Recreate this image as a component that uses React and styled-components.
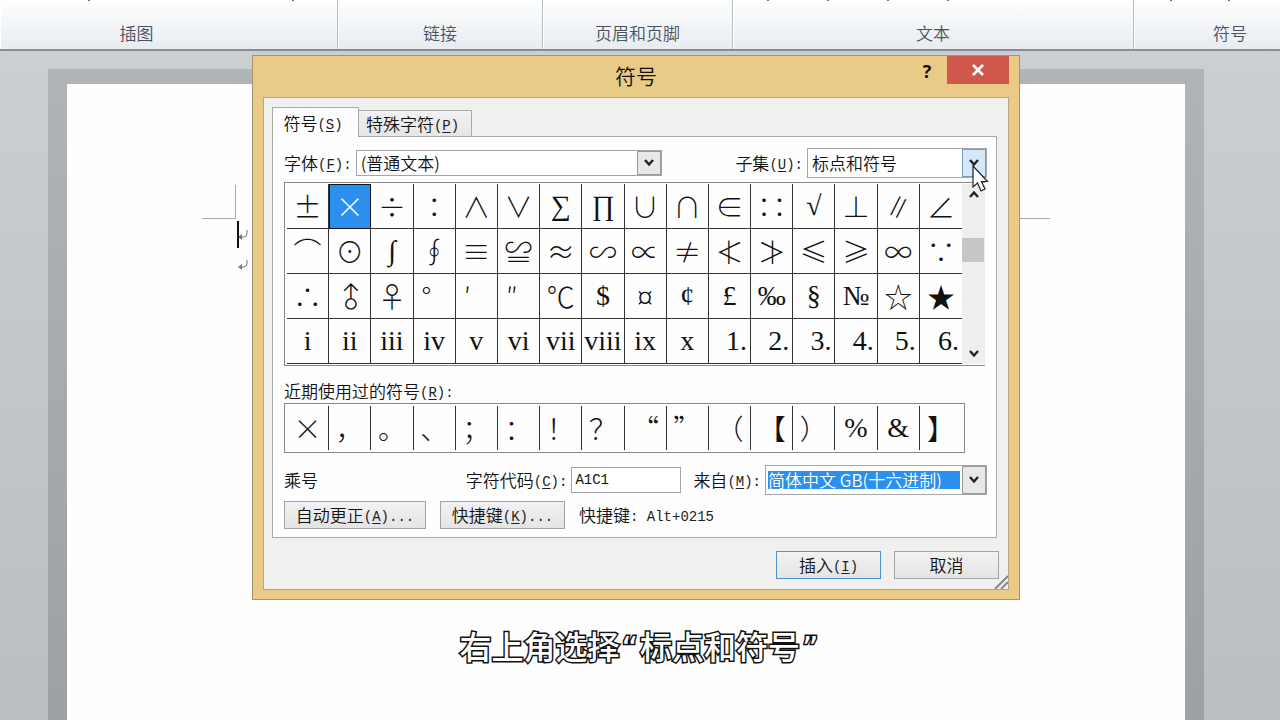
import React from 'react';
import styled, { createGlobalStyle } from 'styled-components';

const GROUPS = [
  { name: '插图', shift: '0 64px 0 0', start: 88, gap: 202, tips: 2 },
  { name: '链接', shift: '0', start: 0, gap: 0, tips: 0 },
  { name: '页眉和页脚', shift: '0', start: 0, gap: 0, tips: 0 },
  { name: '文本', shift: '0', start: 34, gap: 58, tips: 4 },
  { name: '符号', shift: '0 0 0 46px', start: 36, gap: 56, tips: 2 },
];

const SYMBOLS = [
  ['±', '×', '÷', '∶', '∧', '∨', '∑', '∏', '∪', '∩', '∈', '∷', '√', '⊥', '∥', '∠'],
  ['⌒', '⊙', '∫', '∮', '≡', '≌', '≈', '∽', '∝', '≠', '≮', '≯', '≤', '≥', '∞', '∵'],
  ['∴', '♂', '♀', '°', '′', '″', '℃', '$', '¤', '¢', '£', '‰', '§', '№', '☆', '★'],
  ['i', 'ii', 'iii', 'iv', 'v', 'vi', 'vii', 'viii', 'ix', 'x', '1.', '2.', '3.', '4.', '5.', '6.'],
];

const RECENT = ['×', '，', '。', '、', '；', '：', '！', '？', '“', '”', '（', '【', '）', '%', '&', '】'];

const SERIF = /^[ivx\d∑∏∫√$£§№%&‰¢]/;

// Degree and prime marks hug the left of the cell, list numbers the right
const getAlign = (char) => {
  if (/[°′″]/.test(char)) {
    return 'left';
  }
  return /\d\./.test(char) ? 'right' : 'center';
};

const Chevron = ({ up }) => (
  <svg width="12" height="8" viewBox="0 0 12 8" aria-hidden="true">
    <path d={up ? 'M2 7 6 2.500 10 7' : 'M2 1 6 5.5 10 1'} fill="none" stroke="#222" strokeWidth="2.4" />
  </svg>
);

const ParagraphMark = () => (
  <svg width="11" height="14" viewBox="0 0 11 14" aria-hidden="true">
    <path d="M10 3V6Q10 10 7 10H4" fill="none" stroke="#777" />
    <path d="M1 10 5 7V13Z" fill="#777" />
  </svg>
);

const Hotkey = ({ letter, after }) => (
  <Latin>
    (<u>{letter}</u>){after}
  </Latin>
);

const Dropdown = ({ id, value, width, tall, active, selected, children }) => (
  <Combo $width={width} $tall={tall}>
    <ComboField id={id} $selected={selected} defaultValue={value}>
      <option>{value}</option>
    </ComboField>
    <ComboArrow $active={active}>
      <Chevron />
    </ComboArrow>
    {children}
  </Combo>
);

const App = () => {
  return (
    <Screen>
      <GlobalStyle />
      <Ribbon>
        {GROUPS.map(({ name, shift, start, gap, tips }) => (
          <Group key={name}>
            <Tips $start={start} $gap={gap}>
              {Array.from({ length: tips }, (_, i) => (
                <Tip key={i} />
              ))}
            </Tips>
            <GroupName $shift={shift}>{name}</GroupName>
          </Group>
        ))}
      </Ribbon>
      <Workspace>
        <PageEdge>
          <Page>
            <Margins>
              <Corner $side="right" />
              <Corner $side="left" />
            </Margins>
            <Line>
              <Caret />
              <ParagraphMark />
            </Line>
            <Line>
              <ParagraphMark />
            </Line>
          </Page>
        </PageEdge>
      </Workspace>

      <Overlay>
        <Dialog role="dialog" aria-labelledby="title">
          <TitleBar>
            <Title id="title">符号</Title>
            <WindowButtons>
              <HelpButton aria-label="帮助">?</HelpButton>
              <CloseButton aria-label="关闭">
                <svg width="14" height="12" viewBox="0 0 14 12">
                  <path d="M2 1 12 11M12 1 2 11" stroke="#fff" strokeWidth="2.6" />
                </svg>
              </CloseButton>
            </WindowButtons>
          </TitleBar>
          <Body>
            <Tabs role="tablist">
              <Tab role="tab" aria-selected="true" $active>
                符号
                <Hotkey letter="S" />
              </Tab>
              <Tab role="tab" aria-selected="false">
                特殊字符
                <Hotkey letter="P" />
              </Tab>
            </Tabs>
            <Panel>
              <Row>
                <Label htmlFor="font">
                  字体
                  <Hotkey letter="F" after=":" />
                </Label>
                <Dropdown id="font" value="(普通文本)" width={306} />
                <Spring />
                <Label htmlFor="subset">
                  子集
                  <Hotkey letter="U" after=":" />
                </Label>
                <Dropdown id="subset" value="标点和符号" width={180} tall active>
                  <Pointer width="18" height="28" viewBox="0 0 18 28" aria-hidden="true">
                    <path
                      d="M2 1V22L6.5 18 10 26 14 24 10.500 16.500H16.500Z"
                      fill="#fff"
                      stroke="#222"
                      strokeWidth="1.2"
                    />
                  </Pointer>
                </Dropdown>
              </Row>

              <SymbolArea>
                <Symbols>
                  <tbody>
                    {SYMBOLS.map((row) => (
                      <tr key={row[0]}>
                        {row.map((char) => (
                          <Cell
                            key={char}
                            $serif={SERIF.test(char)}
                            $align={getAlign(char)}
                            $selected={char === '×'}
                          >
                            {char === '♂' ? <Upright>{char}</Upright> : char}
                          </Cell>
                        ))}
                      </tr>
                    ))}
                  </tbody>
                </Symbols>
                <Scrollbar>
                  <ScrollButton aria-label="向上">
                    <Chevron up />
                  </ScrollButton>
                  <Thumb />
                  <Spring />
                  <ScrollButton aria-label="向下">
                    <Chevron />
                  </ScrollButton>
                </Scrollbar>
              </SymbolArea>

              <RecentLabel>
                近期使用过的符号
                <Hotkey letter="R" after=":" />
              </RecentLabel>
              <RecentBox>
                <Symbols>
                  <tbody>
                    <tr>
                      {RECENT.map((char) => (
                        <RecentCell key={char} $serif={SERIF.test(char)}>
                          {char}
                        </RecentCell>
                      ))}
                    </tr>
                  </tbody>
                </Symbols>
              </RecentBox>

              <CodeRow>
                <span>乘号</span>
                <Spring />
                <Label htmlFor="code">
                  字符代码
                  <Hotkey letter="C" after=":" />
                </Label>
                <CodeInput id="code" defaultValue="A1C1" />
                <Label htmlFor="from">
                  来自
                  <Hotkey letter="M" after=":" />
                </Label>
                <Dropdown id="from" value="简体中文 GB(十六进制)" width={222} tall selected />
              </CodeRow>

              <ActionRow>
                <Button $width={142}>
                  自动更正
                  <Hotkey letter="A" after="..." />
                </Button>
                <Button $width={125}>
                  快捷键
                  <Hotkey letter="K" after="..." />
                </Button>
                <span>
                  快捷键<Latin>: Alt+0215</Latin>
                </span>
              </ActionRow>
            </Panel>

            <Footer>
              <Button $width={105} $primary>
                插入
                <Hotkey letter="I" />
              </Button>
              <Button $width={105}>取消</Button>
            </Footer>
            <Grip width="14" height="14" viewBox="0 0 14 14" aria-hidden="true">
              <path d="M1 14 14 1M7 14 14 7" stroke="#888" strokeWidth="2" />
            </Grip>
          </Body>
        </Dialog>
        <Caption>
          右上角选择<Quote>“</Quote>标点和符号<Quote>”</Quote>
        </Caption>
      </Overlay>
    </Screen>
  );
};

const GlobalStyle = createGlobalStyle`
  * {
    box-sizing: border-box;
  }

  body {
    margin: 0;
    overflow: hidden;
    font-family: 'Noto Sans CJK SC', sans-serif;
    font-size: 17px;
    font-weight: 350;
    line-height: 24px;
    color: #111;
  }

  button, input, select {
    margin: 0;
    padding: 0;
    font: inherit;
    color: inherit;
  }
`;

const Screen = styled.div`
  position: relative;
  display: flex;
  flex-direction: column;
  height: 100vh;
  overflow: hidden;
`;

const Ribbon = styled.header`
  display: grid;
  grid-template-columns:
    minmax(0, 338fr) minmax(0, 205fr) minmax(0, 190fr)
    minmax(0, 401fr) minmax(0, 146fr);
  height: 51px;
  background: linear-gradient(#fdfefe, #e8ecf0);
  border-bottom: 2px solid #868e99;
`;

const Group = styled.div`
  display: flex;
  flex-direction: column;
  justify-content: space-between;
  border-right: 1px solid #b9bfc6;
  box-shadow: inset 1px 0 #fff;

  &:last-child {
    border-right: none;
  }
`;

const Tips = styled.div`
  display: flex;
  gap: ${(props) => props.$gap}px;
  height: 1px;
  padding-left: ${(props) => props.$start}px;
`;

const Tip = styled.span`
  width: 2px;
  background: #777;
`;

const GroupName = styled.div`
  padding: ${(props) => props.$shift};
  margin-bottom: 4px;
  text-align: center;
  font-size: 17px;
  color: #4c5060;
`;

const Workspace = styled.main`
  flex: 1;
  display: flex;
  padding: 18px 76px 0 48px;
  background: linear-gradient(#cbcfd2, #b9bec1);
`;

const PageEdge = styled.div`
  flex: 1;
  display: flex;
  padding: 15px 19px 0;
  background: linear-gradient(#b0b4b6, #9da1a4);
`;

const Page = styled.article`
  flex: 1;
  padding: 101px 135px 0;
  background: #fefefe;
`;

const Margins = styled.div`
  display: flex;
  justify-content: space-between;
`;

const Corner = styled.div`
  width: 34px;
  height: 34px;
  border-bottom: 1px solid #aaa;
  border-${(props) => props.$side}: 1px solid #aaa;
`;

const Line = styled.div`
  position: relative;
  display: flex;
  align-items: center;
  height: 30px;
  padding-left: 35px;
`;

const Caret = styled.span`
  position: absolute;
  left: 35px;
  width: 2px;
  height: 27px;
  background: #111;
`;

const Overlay = styled.div`
  position: absolute;
  inset: 0;
  display: flex;
  flex-direction: column;
  align-items: center;
  padding: 55px 8px 0 0;
`;

const Dialog = styled.section`
  width: 768px;
  padding: 0 10px 9px;
  background: #e9cb87;
  border: 1px solid #a5946c;
`;

const TitleBar = styled.header`
  display: grid;
  grid-template-columns: 1fr auto 1fr;
  height: 41px;
`;

const Title = styled.h1`
  grid-column: 2;
  margin: 0;
  font-size: 21px;
  font-weight: 350;
  line-height: 38px;
`;

const WindowButtons = styled.div`
  display: flex;
  justify-content: flex-end;
  align-items: flex-start;
`;

const HelpButton = styled.button`
  width: 40px;
  height: 29px;
  border: none;
  background: none;
  font-family: 'Open Sans', sans-serif;
  font-size: 18px;
  font-weight: 700;
`;

const CloseButton = styled.button`
  display: grid;
  place-items: center;
  width: 62px;
  height: 28px;
  border: none;
  background: #d0574b;
`;

const Body = styled.div`
  position: relative;
  padding: 9px 11px 10px 8px;
  background: #f0f0ef;
  border: 1px solid #b9a67c;
`;

const Tabs = styled.div`
  display: flex;
  align-items: flex-end;
`;

const Tab = styled.button`
  width: ${(props) => (props.$active ? 87 : 113)}px;
  height: ${(props) => (props.$active ? 30 : 26)}px;
  margin-bottom: ${(props) => (props.$active ? -1 : 0)}px;
  padding-right: 5px;
  z-index: ${(props) => (props.$active ? 1 : 0)};
  background: ${(props) => (props.$active ? '#fefefe' : 'linear-gradient(#f1f1f1, #e6e6e6)')};
  border: 1px solid #a9a9a9;
  border-bottom: none;
  border-left-width: ${(props) => (props.$active ? 1 : 0)}px;
`;

const Panel = styled.div`
  padding: 11px 9px 8px 11px;
  background: #fefefe;
  border: 1px solid #a9a9a9;
`;

const Row = styled.div`
  display: flex;
  align-items: center;
  height: 30px;
`;

const Spring = styled.div`
  flex: 1;
`;

const Label = styled.label`
  margin-right: 4px;
  white-space: nowrap;
`;

const Latin = styled.span`
  font-family: 'Liberation Mono', monospace;
  font-size: 14px;
  line-height: 0;
  vertical-align: 1px;
  color: #222;

  u {
    text-underline-offset: 2px;
  }
`;

const Combo = styled.div`
  position: relative;
  display: flex;
  width: ${(props) => props.$width}px;
  height: ${(props) => (props.$tall ? 30 : 26)}px;
  background: #fff;
  border: 1px solid #a4a4a4;
`;

const ComboField = styled.select`
  flex: 1;
  min-width: 0;
  appearance: none;
  border: none;
  margin: ${(props) => (props.$selected ? '5px 2px' : '0 4px')};
  line-height: ${(props) => (props.$selected ? 18 : 24)}px;
  color: ${(props) => (props.$selected ? '#fff' : '#111')};
  background: ${(props) => (props.$selected ? '#2b8ff0' : '#fff')};
`;

const ComboArrow = styled.span`
  display: grid;
  place-items: center;
  width: 24px;
  background: ${(props) => (props.$active ? '#d3e8f8' : '#e8e8e8')};
  border: 1px solid ${(props) => (props.$active ? '#6f9fc8' : '#999')};
`;

const Pointer = styled.svg`
  position: absolute;
  right: -3px;
  top: 16px;
  z-index: 2;
`;

const SymbolArea = styled.div`
  display: flex;
  width: 701px;
  margin-top: 4px;
  padding: 1px 0 1px 2px;
  border: solid #888;
  border-width: 1px 0 1px 1px;
`;

const Symbols = styled.table`
  flex: 1;
  width: 100%;
  table-layout: fixed;
  border-collapse: separate;
  border-spacing: 0;
`;

const PADDING = {
  left: '0 0 0 8px',
  center: '0',
  right: '0 3px 0 0',
};

const Cell = styled.td`
  height: 45px;
  padding: ${(props) => PADDING[props.$align || 'center']};
  text-align: ${(props) => props.$align || 'center'};
  font-family: ${(props) => (props.$serif ? "'Liberation Serif', 'Noto Sans CJK SC', serif" : "'Noto Sans CJK SC', sans-serif")};
  font-size: 28px;
  font-weight: 300;
  line-height: 42px;
  white-space: nowrap;
  color: ${(props) => (props.$selected ? '#fff' : '#111')};
  background: ${(props) => (props.$selected ? '#2b8ff0' : 'none')};
  border-right: 1px solid #333;
  border-bottom: 1px solid #333;
  outline: ${(props) => (props.$selected ? '1px solid #111' : 'none')};
  outline-offset: -1px;

  &:last-child {
    border-right: none;
  }
`;

const Upright = styled.span`
  display: inline-block;
  line-height: 28px;
  transform: rotate(-45deg);
`;

const Scrollbar = styled.div`
  display: flex;
  flex-direction: column;
  width: 23px;
  background: #eee;
`;

const ScrollButton = styled.button`
  display: grid;
  place-items: center;
  height: 20px;
  border: none;
  background: none;
`;

const Thumb = styled.div`
  height: 24px;
  margin: 34px 1px 0 0;
  background: #c6c6c6;
`;

const RecentLabel = styled.div`
  margin-top: 13px;
  line-height: 24px;
`;

const RecentBox = styled.div`
  width: 681px;
  padding: 2px;
  border: 1px solid #888;
`;

const RecentCell = styled(Cell)`
  height: 44px;
  border-bottom: none;
`;

const CodeRow = styled.div`
  display: flex;
  align-items: center;
  height: 30px;
  margin-top: 12px;
`;

const CodeInput = styled.input`
  width: 110px;
  height: 26px;
  margin-right: 12px;
  padding-left: 3px;
  background: #fff;
  border: 1px solid #a4a4a4;
  font-family: 'Liberation Mono', monospace;
  font-size: 14px;
`;

const ActionRow = styled.div`
  display: flex;
  align-items: center;
  gap: 14px;
  margin-top: 6px;
`;

const Button = styled.button`
  width: ${(props) => props.$width}px;
  height: 28px;
  background: linear-gradient(#f2f2f2, #e4e4e4);
  border: 1px solid ${(props) => (props.$primary ? '#4b94d4' : '#a4a4a4')};
`;

const Footer = styled.footer`
  display: flex;
  justify-content: flex-end;
  gap: 13px;
  margin: 13px -2px 0 0;
`;

const Grip = styled.svg`
  position: absolute;
  right: 0;
  bottom: 0;
`;

const Caption = styled.p`
  margin: 21px 0 0 8px;
  font-size: 32px;
  font-weight: 500;
  line-height: 48px;
  color: #fff;
  -webkit-text-stroke: 3px #111;
  paint-order: stroke fill;
`;

const Quote = styled.span`
  padding: 0 2px;
  font-family: 'DejaVu Sans', sans-serif;
  line-height: 0;
`;

export default App;
